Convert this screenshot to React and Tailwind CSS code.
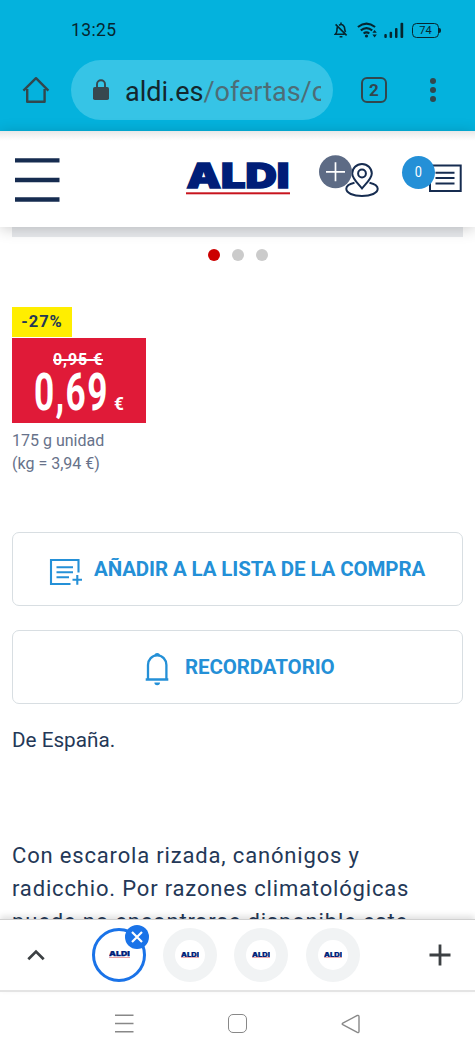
import React from 'react';

const tabs = [
  { id: 1, active: true },
  { id: 2, active: false },
  { id: 3, active: false },
  { id: 4, active: false },
];

function AldiLogo({ className }) {
  return (
    <svg viewBox="0 0 104 34" className={className}>
      <text
        x="0.5"
        y="26"
        textLength="103"
        lengthAdjust="spacingAndGlyphs"
        fontFamily="Inter, sans-serif"
        fontWeight="900"
        fontSize="33.5"
        fill="#001e78"
        stroke="#001e78"
        strokeWidth="1.4"
      >
        ALDI
      </text>
      <rect x="0" y="30.3" width="104" height="2" fill="#c8141e" />
    </svg>
  );
}

function StatusBar() {
  return (
    <div className="h-[60px] flex items-center justify-between pl-[71px] pr-[34px]">
      <span className="text-[17.5px] leading-5 tracking-[0.4px] text-[#06262f]">13:25</span>
      <div className="flex items-center">
        {/* Muted bell */}
        <svg width="14" height="18" viewBox="0 0 14 18" fill="none" stroke="#06262f" strokeWidth="1.6">
          <path d="M3.4 6Q2.9 7.5 2.9 10Q2.7 11.6 1.3 13.3H10.5M5 4.2C8.5 2.3 10.8 5 10.8 8.4Q10.8 9.8 11.6 11M7 1.4V3.4M1.6 3.4L12.6 14.4M5.6 15.7H8.4" />
        </svg>
        {/* Wifi */}
        <svg width="21" height="18" viewBox="0 0 21 18" fill="none" stroke="#06262f" strokeWidth="2.1" className="ml-[9px]">
          <path d="M.9 6Q9.5-.7 18.1 6M3.8 9.4Q9.5 4.9 15.2 9.4M6.6 12.5Q9.5 10.2 12.3 12.5" />
          <circle cx="9.5" cy="15" r="1.6" fill="#06262f" stroke="none" />
          <path d="M15.4 11.8L17.6 9L19.8 11.8ZM15.4 13.6L17.6 16.4L19.8 13.6Z" fill="#06262f" stroke="none" />
        </svg>
        {/* Signal */}
        <svg width="20" height="18" viewBox="0 0 20 18" fill="#06262f" className="ml-[6px]">
          <rect x="0.3" y="13" width="2.5" height="4" rx="1" />
          <rect x="5.6" y="10.7" width="2.5" height="6.3" rx="1" />
          <rect x="11" y="7" width="2.5" height="10" rx="1" />
          <rect x="16.5" y="1.8" width="2.7" height="15.2" rx="1" />
        </svg>
        {/* Battery */}
        <div className="ml-[8px] flex items-center">
          <div className="w-[27px] h-[15px] rounded-[4.5px] border-[1.5px] border-[#06262f] flex items-center justify-center text-[11px] leading-none text-[#06262f]">
            74
          </div>
          <div className="w-[2px] h-[5px] rounded-r bg-[#06262f]" />
        </div>
      </div>
    </div>
  );
}

function AddressBar() {
  return (
    <div className="h-[71px] flex items-start">
      <svg width="28" height="28" viewBox="0 0 28 28" fill="none" stroke="#32474d" strokeWidth="2.4" className="ml-[22px] mt-[16px]" strokeLinejoin="round">
        <path d="M5.2 13V25.7H22.6V13M1.4 14.6L14 2.2L26.4 14.6" />
      </svg>
      <div className="ml-[21px] w-[262px] h-[60px] rounded-full bg-[#36c4e6] flex items-center pl-[22px]">
        <svg width="16" height="22" viewBox="0 0 16 22" fill="none">
          <rect x="0" y="8" width="16" height="13" rx="1.8" fill="#37474f" />
          <path d="M4 9V5.2a4 4 0 0 1 8 0V9" stroke="#37474f" strokeWidth="1.9" />
        </svg>
        <div className="ml-[16px] w-[196px] overflow-hidden whitespace-nowrap text-[27px] leading-[34px] text-[#4d6d77] pt-[3px]">
          <span className="text-[#13272d]">aldi.es</span>/ofertas/o
        </div>
      </div>
      <div className="ml-[28px] mt-[17px] w-[26px] h-[26px] rounded-[6px] border-[2.5px] border-[#32474d] flex items-center justify-center text-[17px] leading-none font-bold text-[#32474d]">
        2
      </div>
      <div className="ml-[43px] mt-[18px] flex flex-col gap-[3px]">
        <span className="w-1.5 h-1.5 rounded-full bg-[#32474d]" />
        <span className="w-1.5 h-1.5 rounded-full bg-[#32474d]" />
        <span className="w-1.5 h-1.5 rounded-full bg-[#32474d]" />
      </div>
    </div>
  );
}

function SiteHeader() {
  return (
    <header className="relative z-10 h-[96px] shrink-0 bg-gradient-to-b from-[#e8e8e8] via-white via-[10%] to-white shadow-[0_2px_14px_rgba(0,0,0,0.2)] flex items-start">
      <svg width="45" height="44" viewBox="0 0 45 44" stroke="#162c50" strokeWidth="4.4" className="ml-[15px] mt-[27px]">
        <path d="M0 2.4H44.5M0 22H44.5M0 41.5H44.5" />
      </svg>
      <AldiLogo className="ml-[126px] mt-[31px] w-[104px] h-[34px]" />
      <svg width="60" height="44" viewBox="0 0 60 44" fill="none" stroke="#162c50" strokeWidth="2" className="ml-[29px] mt-[24px]">
        <path d="M35.5 27.8C30 29 27.3 31 27.3 33.8C27.3 38 34 41 43 41S58.7 38 58.7 33.8C58.7 31 56 29 50.5 27.8" />
        <path d="M43 33.5C39 28.5 33.2 23.5 33.2 18.5A9.8 9.6 0 0 1 52.8 18.5C52.8 23.5 47 28.5 43 33.5Z" fill="#fff" />
        <circle cx="43" cy="18.5" r="3.9" />
        <circle cx="16.5" cy="16.8" r="16.5" fill="#5d6b85" stroke="none" />
        <path d="M7 16.8H26M16.5 7.3V26.3" stroke="#fff" strokeWidth="1.7" />
      </svg>
      <div className="relative ml-[23px] mt-[25px] w-[60px] h-[40px]">
        <svg width="60" height="40" viewBox="0 0 60 40" fill="none" stroke="#162c50" strokeWidth="2">
          <rect x="28" y="9.5" width="30.7" height="25.5" />
          <path d="M33.5 16.7H52.5M33.5 22H52.5M33.5 27.5H52.5" />
        </svg>
        <span className="absolute left-0 top-0 w-[33px] h-[33px] rounded-full bg-[#2490d7] text-white text-[15px] flex items-center justify-center">
          <span className="scale-x-[0.85]">0</span>
        </span>
      </div>
    </header>
  );
}

function OutlineButton({ icon, className, children }) {
  return (
    <button className={`w-full h-[74px] rounded-[7px] border-[1.5px] border-[#d8dee2] flex items-center text-[#2490d7] font-bold text-[20.5px] whitespace-nowrap ${className}`}>
      {icon}
      {children}
    </button>
  );
}

function Offer() {
  return (
    <main className="flex-1 min-h-0 overflow-hidden px-3 text-[#243857]">
      <div className="h-[10px] bg-[#e7e9ec]" />
      <div className="mt-[12px] flex justify-center gap-[12px]">
        <span className="w-[12px] h-[12px] rounded-full bg-[#cc0000]" />
        <span className="w-[12px] h-[12px] rounded-full bg-[#cbcbcb]" />
        <span className="w-[12px] h-[12px] rounded-full bg-[#cbcbcb]" />
      </div>

      {/* Price */}
      <div className="mt-[46px] w-[60px] h-[30px] bg-[#ffee00] flex items-center justify-center text-[16.5px] font-bold tracking-[1px]">
        -27%
      </div>
      <div className="mt-[1px] w-[134px] h-[85px] bg-[#e01a38] text-white font-bold">
        <div className="pt-[12px] pl-[41px] text-[16px] leading-[20px] tracking-[0.9px]">
          <span className="line-through decoration-2">0,95 €</span>
        </div>
        <div className="pl-[22px] flex items-baseline leading-[45px]">
          <span className="w-[80px] text-[51px] tracking-[2px] origin-left scale-x-[0.69]">0,69</span>
          <span className="text-[18px] origin-left scale-x-[0.95]">€</span>
        </div>
      </div>
      <p className="mt-[6px] text-[16px] leading-[23px] text-[#67728a]">
        175 g unidad
        <br />
        (kg = 3,94 €)
      </p>

      <OutlineButton
        className="mt-[57px] pl-[36px] tracking-[-0.12px]"
        icon={
          <svg width="34" height="28" viewBox="0 0 34 28" fill="none" stroke="#2490d7" strokeWidth="2.1" className="mr-[11px] mt-[5px]">
            <path d="M29.5 14.5V2H2V26H21.5M7.5 9.3H24M7.5 14.3H24M7.5 19.3H20M23.5 21.8H33M28.3 17V26.7" />
          </svg>
        }
      >
        AÑADIR A LA LISTA DE LA COMPRA
      </OutlineButton>
      <OutlineButton
        className="mt-6 pl-[132px] tracking-[-0.1px]"
        icon={
          <svg width="24" height="34" viewBox="0 0 24 34" fill="none" stroke="#2490d7" strokeWidth="2.3" className="mr-[16px] mt-[4px]">
            <path d="M3 27.5V13A9.2 9.7 0 0 1 21.4 13V27.5M.7 27.5H23.3" />
            <path d="M9.4 3.7A2.8 2.8 0 0 1 15 3.7ZM9.4 30.5A2.8 2.8 0 0 0 15 30.5Z" fill="#2490d7" stroke="none" />
          </svg>
        }
      >
        RECORDATORIO
      </OutlineButton>

      <p className="mt-[20px] text-[20.7px] leading-[33px]">De España.</p>
      <p className="mt-[82px] text-[22px] leading-[33px] whitespace-nowrap tracking-[0.83px]">
        Con escarola rizada, canónigos y
        <br />
        radicchio. Por razones climatológicas
        <br />
        puede no encontrarse disponible este
      </p>
    </main>
  );
}

function TabStrip() {
  return (
    <div className="relative z-10 h-[73px] shrink-0 bg-white border-t border-[#d0d0d0] border-b-2 border-b-[#e4e4e4] shadow-[0_-3px_6px_rgba(0,0,0,0.12)] flex items-center">
      <svg width="18" height="12" viewBox="0 0 18 12" fill="none" stroke="#3c4043" strokeWidth="2.7" className="ml-[27px]">
        <path d="M1.3 10.3L9 2.6L16.7 10.3" />
      </svg>
      <div className="ml-[47px] mb-px flex gap-[17.2px]">
        {tabs.map((tab) =>
          tab.active ? (
            <div key={tab.id} className="relative w-[54px] h-[54px] rounded-full border-[3px] border-[#1a73e8] flex items-center justify-center">
              <AldiLogo className="w-[21px] h-[7px]" />
              <svg width="24" height="24" viewBox="0 0 24 24" className="absolute -top-[6px] -right-[6px]">
                <circle cx="12" cy="12" r="12" fill="#1a73e8" />
                <path d="M7 7L17 17M17 7L7 17" stroke="#fff" strokeWidth="2.2" />
              </svg>
            </div>
          ) : (
            <div key={tab.id} className="w-[54px] h-[54px] rounded-full bg-[#f1f3f4] flex items-center justify-center">
              <div className="w-[30px] h-[30px] rounded-full bg-white flex items-center justify-center">
                <AldiLogo className="w-[18px] h-[6px]" />
              </div>
            </div>
          )
        )}
      </div>
      <svg width="22" height="22" viewBox="0 0 22 22" stroke="#3c4043" strokeWidth="2.8" className="ml-[69px]">
        <path d="M.5 11H21.5M11 .5V21.5" />
      </svg>
    </div>
  );
}

function SystemNav() {
  return (
    <nav className="h-[64px] shrink-0 bg-white flex items-center pb-px">
      <svg width="19" height="19" viewBox="0 0 19 19" stroke="#888888" strokeWidth="1.4" className="ml-[115px]">
        <path d="M0 1.2H18.5M0 9.5H18.5M0 17.8H18.5" />
      </svg>
      <span className="ml-[94px] w-[19px] h-[19px] rounded-[5px] border-[1.5px] border-[#888888]" />
      <svg width="20" height="20" viewBox="0 0 20 20" fill="none" stroke="#888888" strokeWidth="1.4" className="ml-[94px]">
        <path d="M1.8 9.2L16.3 1.5Q18 .9 18 2.7V17.3Q18 19.1 16.3 18.4L1.8 10.7Q.6 10 1.8 9.2Z" />
      </svg>
    </nav>
  );
}

export default function App() {
  return (
    <div className="w-[475px] h-[1056px] overflow-hidden flex flex-col bg-white font-[Roboto,sans-serif]">
      <div className="shrink-0 bg-[#04b2dd]">
        <StatusBar />
        <AddressBar />
      </div>
      <SiteHeader />
      <Offer />
      <TabStrip />
      <SystemNav />
    </div>
  );
}
